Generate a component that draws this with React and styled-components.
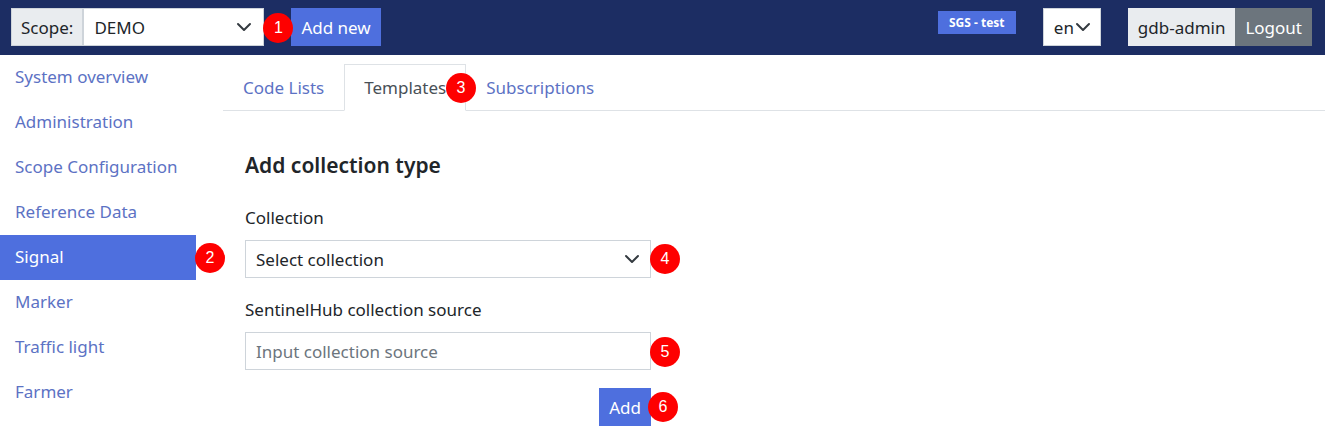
import React from "react";
import styled, { createGlobalStyle } from "styled-components";

const GlobalStyle = createGlobalStyle`
  html, body { margin: 0; padding: 0; background: #fff; }
  body { font-family: "Noto Sans", "Open Sans", sans-serif; font-size: 17px; color: #212529; overflow: hidden; }
  * { box-sizing: border-box; }
`;

const Page = styled.div`
  width: 1325px;
  height: 439px;
  overflow: hidden;
  display: flex;
  flex-direction: column;
`;

const Header = styled.header`
  height: 55px;
  flex: none;
  background: #1c2d63;
  display: flex;
  align-items: flex-start;
  padding: 8px 13px 0 11px;
`;

const Group = styled.div`
  display: flex;
  height: 38px;
  margin-right: ${(p) => p.$mr || 0}px;
`;

const Addon = styled.span`
  display: flex;
  align-items: center;
  padding: 0 9px;
  background: #e9ecef;
  border: 1px solid #ced4da;
  white-space: nowrap;
`;

const HeaderSelect = styled.div`
  position: relative;
  display: flex;
  align-items: center;
  justify-content: space-between;
  width: ${(p) => p.$w}px;
  background: #fff;
  border: 1px solid #ced4da;
  padding: ${(p) => p.$pad};
  white-space: nowrap;
`;

const Chevron = styled.svg.attrs({ viewBox: "0 0 16 16", width: 16, height: 16, fill: "none" })`
  flex: none;
  stroke: #343a40;
  stroke-width: 2;
  stroke-linecap: round;
  stroke-linejoin: round;
`;

const Marker = styled.span`
  position: absolute;
  left: ${(p) => p.$x}px;
  top: ${(p) => p.$y}px;
  width: 30px;
  height: 30px;
  border-radius: 50%;
  background: #fe0000;
  color: #fff;
  font-family: "Liberation Sans", Arial, sans-serif;
  font-size: 16px;
  display: flex;
  align-items: center;
  justify-content: center;
  z-index: 2;
`;

const Primary = styled.button`
  height: 38px;
  border: 0;
  background: #4e6fde;
  color: #fff;
  font: inherit;
  padding: 0 ${(p) => p.$px}px;
  white-space: nowrap;
`;

const Spacer = styled.div`
  flex: 1;
`;

const EnvBadge = styled.span`
  margin: 3px 27px 0 0;
  height: 23px;
  width: 78px;
  background: #4e6fde;
  color: #fff;
  font-size: 12px;
  font-weight: 700;
  display: flex;
  align-items: center;
  justify-content: center;
  white-space: nowrap;
`;

const UserName = styled.span`
  display: flex;
  align-items: center;
  padding: 0 10px;
  background: #e9ecef;
`;

const Logout = styled.button`
  border: 0;
  padding: 0 10px;
  background: #6c757d;
  color: #fff;
  font: inherit;
`;

const Body = styled.div`
  flex: 1;
  display: flex;
  position: relative;
`;

const Sidebar = styled.nav`
  width: 223px;
  flex: none;
  padding-right: 27px;
`;

const NavItem = styled.a`
  display: flex;
  align-items: center;
  height: 45px;
  padding: 0 15px 2px;
  color: ${(p) => (p.$active ? "#fff" : "#5c72c4")};
  background: ${(p) => (p.$active ? "#4e6fde" : "transparent")};
`;

const Main = styled.main`
  flex: 1;
  min-width: 0;
  padding-top: 9px;
`;

const Tabs = styled.div`
  display: flex;
  height: 47px;
  border-bottom: 1px solid #dee2e6;
`;

const Tab = styled.a`
  display: flex;
  align-items: center;
  height: 47px;
  padding: 0 ${(p) => p.$px}px 0;
  color: ${(p) => (p.$active ? "#495057" : "#5c72c4")};
  background: ${(p) => (p.$active ? "#fff" : "transparent")};
  border: 1px solid ${(p) => (p.$active ? "#dee2e6" : "transparent")};
  border-bottom-color: ${(p) => (p.$active ? "#fff" : "transparent")};
`;

const Form = styled.form`
  width: 428px;
  padding-left: 22px;
  margin-top: 38px;
  display: flex;
  flex-direction: column;
`;

const Title = styled.h2`
  margin: 0 0 25px;
  font-size: 21px;
  line-height: 32px;
  font-weight: 600;
`;

const Label = styled.label`
  display: block;
  line-height: 24px;
  margin-bottom: 10px;
`;

const Field = styled.div`
  position: relative;
  display: flex;
  align-items: center;
  justify-content: space-between;
  height: 38px;
  padding: 0 10px;
  background: #fff;
  border: 1px solid #ced4da;
  margin-bottom: 20px;
  color: ${(p) => (p.$placeholder ? "#6c757d" : "#212529")};
`;

const Actions = styled.div`
  position: relative;
  display: flex;
  justify-content: flex-end;
  margin-top: -2px;
`;

const Arrow = () => (
  <Chevron>
    <path d="M2 5l6 6 6-6" />
  </Chevron>
);

export default function App() {
  return (
    <Page>
      <GlobalStyle />
      <Header>
        <Group $mr={27}>
          <Addon>Scope:</Addon>
          <HeaderSelect $w={181} $pad="0 11px 0 10px">
            DEMO
            <Arrow />
            <Marker $x={179} $y={4}>1</Marker>
          </HeaderSelect>
        </Group>
        <Primary $px={10}>Add new</Primary>
        <Spacer />
        <EnvBadge>SGS - test</EnvBadge>
        <Group $mr={27}>
          <HeaderSelect $w={58} $pad="0 9px 0 10px">
            en
            <Arrow />
          </HeaderSelect>
        </Group>
        <Group>
          <UserName>gdb-admin</UserName>
          <Logout>Logout</Logout>
        </Group>
      </Header>
      <Body>
        <Sidebar>
          <NavItem>System overview</NavItem>
          <NavItem>Administration</NavItem>
          <NavItem>Scope Configuration</NavItem>
          <NavItem>Reference Data</NavItem>
          <NavItem $active>
            Signal
            <Marker $x={195} $y={188}>2</Marker>
          </NavItem>
          <NavItem>Marker</NavItem>
          <NavItem>Traffic light</NavItem>
          <NavItem>Farmer</NavItem>
        </Sidebar>
        <Main>
          <Tabs>
            <Tab $px={19}>Code Lists</Tab>
            <Tab $active $px={19}>Templates</Tab>
            <Tab $px={19}>Subscriptions</Tab>
          </Tabs>
          <Marker $x={446} $y={18}>3</Marker>
          <Form>
            <Title>Add collection type</Title>
            <Label>Collection</Label>
            <Field>
              Select collection
              <Arrow />
              <Marker $x={404} $y={3}>4</Marker>
            </Field>
            <Label>SentinelHub collection source</Label>
            <Field $placeholder>
              Input collection source
              <Marker $x={404} $y={4}>5</Marker>
            </Field>
            <Actions>
              <Primary $px={10}>Add</Primary>
              <Marker $x={403} $y={4}>6</Marker>
            </Actions>
          </Form>
        </Main>
      </Body>
    </Page>
  );
}
